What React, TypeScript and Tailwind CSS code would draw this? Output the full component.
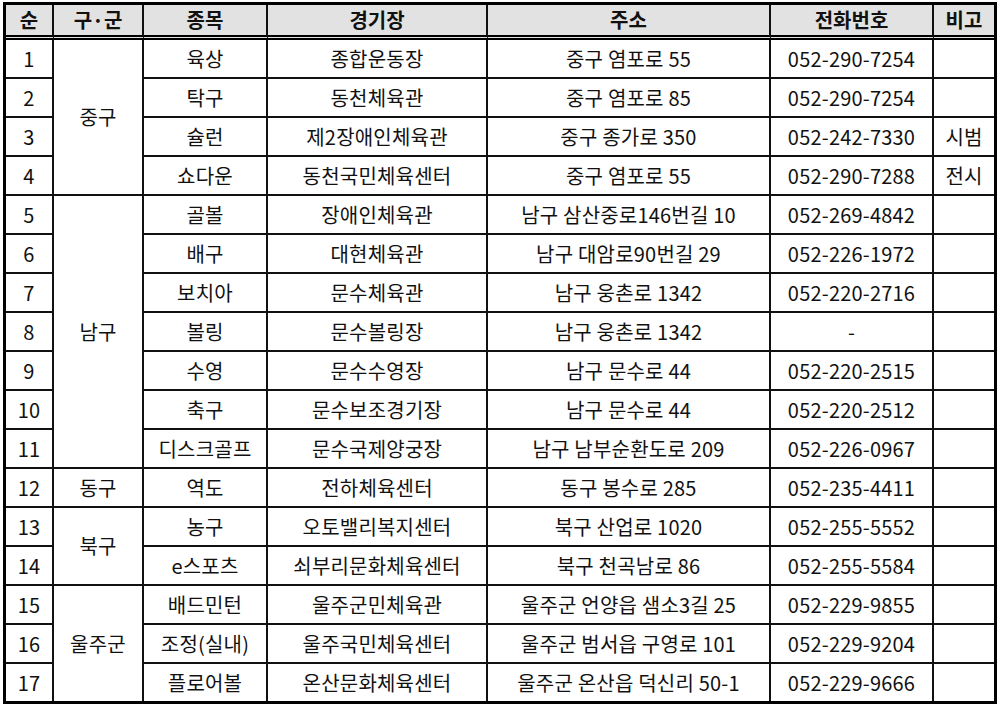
const rows = [
  { no: 1, gu: "중구", span: 4, sport: "육상", venue: "종합운동장", addr: "중구 염포로 55", tel: "052-290-7254", note: "" },
  { no: 2, sport: "탁구", venue: "동천체육관", addr: "중구 염포로 85", tel: "052-290-7254", note: "" },
  { no: 3, sport: "슐런", venue: "제2장애인체육관", addr: "중구 종가로 350", tel: "052-242-7330", note: "시범" },
  { no: 4, sport: "쇼다운", venue: "동천국민체육센터", addr: "중구 염포로 55", tel: "052-290-7288", note: "전시" },
  { no: 5, gu: "남구", span: 7, sport: "골볼", venue: "장애인체육관", addr: "남구 삼산중로146번길 10", tel: "052-269-4842", note: "" },
  { no: 6, sport: "배구", venue: "대현체육관", addr: "남구 대암로90번길 29", tel: "052-226-1972", note: "" },
  { no: 7, sport: "보치아", venue: "문수체육관", addr: "남구 웅촌로 1342", tel: "052-220-2716", note: "" },
  { no: 8, sport: "볼링", venue: "문수볼링장", addr: "남구 웅촌로 1342", tel: "-", note: "" },
  { no: 9, sport: "수영", venue: "문수수영장", addr: "남구 문수로 44", tel: "052-220-2515", note: "" },
  { no: 10, sport: "축구", venue: "문수보조경기장", addr: "남구 문수로 44", tel: "052-220-2512", note: "" },
  { no: 11, sport: "디스크골프", venue: "문수국제양궁장", addr: "남구 남부순환도로 209", tel: "052-226-0967", note: "" },
  { no: 12, gu: "동구", span: 1, sport: "역도", venue: "전하체육센터", addr: "동구 봉수로 285", tel: "052-235-4411", note: "" },
  { no: 13, gu: "북구", span: 2, sport: "농구", venue: "오토밸리복지센터", addr: "북구 산업로 1020", tel: "052-255-5552", note: "" },
  { no: 14, sport: "e스포츠", venue: "쇠부리문화체육센터", addr: "북구 천곡남로 86", tel: "052-255-5584", note: "" },
  { no: 15, gu: "울주군", span: 3, sport: "배드민턴", venue: "울주군민체육관", addr: "울주군 언양읍 샘소3길 25", tel: "052-229-9855", note: "" },
  { no: 16, sport: "조정(실내)", venue: "울주국민체육센터", addr: "울주군 범서읍 구영로 101", tel: "052-229-9204", note: "" },
  { no: 17, sport: "플로어볼", venue: "온산문화체육센터", addr: "울주군 온산읍 덕신리 50-1", tel: "052-229-9666", note: "" },
]

const headers = ["순", "구·군", "종목", "경기장", "주소", "전화번호", "비고"]

export default function App() {
  return (
    <div className="w-[1000px] h-[709px] bg-white pl-[3px] pt-[2px] font-['Noto_Sans_CJK_KR',sans-serif] text-[#111]">
      <table className="table-fixed border-separate border-spacing-0 border-[3px] border-black w-[994px]">
        <colgroup>
          <col className="w-[48px]" />
          <col className="w-[90px]" />
          <col className="w-[124px]" />
          <col className="w-[220px]" />
          <col className="w-[283px]" />
          <col className="w-[163px]" />
          <col className="w-[60px]" />
        </colgroup>
        <thead>
          <tr>
            {headers.map((h, i) => (
              <th
                key={h}
                className={
                  "h-[35px] p-0 bg-[#e2e2e2] text-[20px] font-bold leading-none text-center border-b-[5px] border-double border-black " +
                  (i < headers.length - 1 ? "border-r-2 border-r-[#111]" : "")
                }
              >
                {h}
              </th>
            ))}
          </tr>
        </thead>
        <tbody>
          {rows.map((r, idx) => {
            const last = idx === rows.length - 1
            const cell = "p-0 text-center text-[20px] leading-none tracking-[0.2px] whitespace-nowrap border-[#111] "
            const rb = "border-r-2 "
            const bb = last ? "" : "border-b-2 "
            return (
              <tr key={r.no} className={last ? "h-[37px]" : "h-[39px]"}>
                <td className={cell + rb + bb}>{r.no}</td>
                {r.gu && (
                  <td
                    rowSpan={r.span}
                    className={cell + rb + (idx + (r.span ?? 1) >= rows.length ? "" : "border-b-2 ")}
                  >
                    {r.gu}
                  </td>
                )}
                <td className={cell + rb + bb}>{r.sport}</td>
                <td className={cell + rb + bb}>{r.venue}</td>
                <td className={cell + rb + bb}>{r.addr}</td>
                <td className={cell + rb + bb}>{r.tel}</td>
                <td className={cell + bb + "text-[18px]"}>{r.note}</td>
              </tr>
            )
          })}
        </tbody>
      </table>
    </div>
  )
}
